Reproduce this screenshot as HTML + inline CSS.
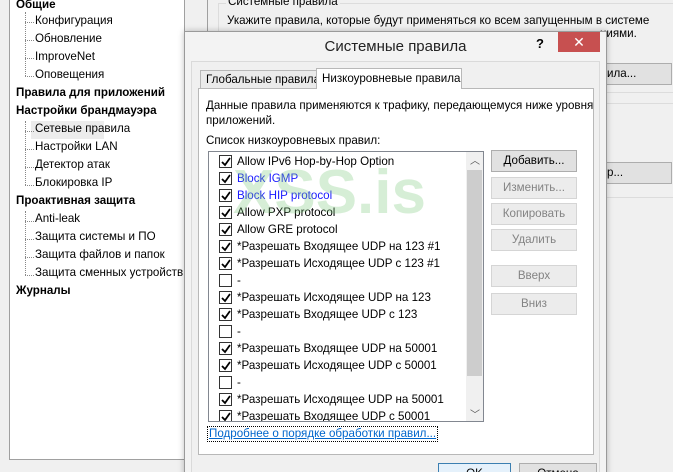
<!DOCTYPE html>
<html><head><meta charset="utf-8"><style>
*{margin:0;padding:0;box-sizing:border-box}
html,body{width:673px;height:472px;overflow:hidden}
body{background:#f0f0f0;font-family:"Liberation Sans","DejaVu Sans",sans-serif;font-size:11.6px;color:#000;position:relative}
.a{position:absolute;white-space:nowrap}
.tree{left:9px;top:-2px;width:176px;height:462px;background:#fff;border:1px solid #a0a0a0;border-top:none;overflow:hidden}
.b{font-weight:bold}
.dot{border-top:1px dotted #888;width:9px}
.vdot{border-left:1px dotted #888}
.btn{position:absolute;border:1px solid #adadad;background:#e1e1e1;text-align:center;line-height:20px;height:22px}
.dis{color:#838383;border-color:#d5d5d5;background:#ececec}
.row{position:absolute;left:10px;height:17px;line-height:17px}
.cb{position:absolute;left:0;top:2px;width:13px;height:13px;border:1px solid #333;background:#fff}
.cb svg{position:absolute;left:1px;top:1px}
.row span{position:absolute;left:18px}
</style></head><body>
<div class="a tree"></div>
<div class="a" style="left:207px;top:0;width:1px;height:32px;background:#a0a0a0"></div>
<div class="a" style="left:218px;top:3px;width:455px;height:90px;border:1px solid #dcdcdc;border-right:none"></div>
<div class="a" style="left:226px;top:-5px;background:#f0f0f0;padding:0 2px">Системные правила</div>
<div class="a" style="left:227px;top:14px">Укажите правила, которые будут применяться ко всем запущенным в системе</div>
<div class="a" style="left:600px;top:27px">ниями.</div>
<div class="btn" style="left:596px;top:63px;width:76px;text-align:left;padding-left:10px">ила...</div>
<div class="a" style="left:218px;top:103px;width:455px;height:95px;border-top:1px solid #dcdcdc;border-bottom:1px solid #dcdcdc"></div>
<div class="btn" style="left:596px;top:162px;width:76px;text-align:left;padding-left:10px">р...</div>

<div class="a vdot" style="left:25px;top:12px;height:64px"></div>
<div class="a vdot" style="left:25px;top:121px;height:64px"></div>
<div class="a vdot" style="left:25px;top:211px;height:64px"></div>
<div class="a b" style="left:16px;top:-2px">Общие</div>
<div class="a dot" style="left:25px;top:22px"></div><div class="a" style="left:35px;top:14px">Конфигурация</div>
<div class="a dot" style="left:25px;top:40px"></div><div class="a" style="left:35px;top:32px">Обновление</div>
<div class="a dot" style="left:25px;top:58px"></div><div class="a" style="left:35px;top:50px">ImproveNet</div>
<div class="a dot" style="left:25px;top:76px"></div><div class="a" style="left:35px;top:68px">Оповещения</div>
<div class="a b" style="left:16px;top:86px">Правила для приложений</div>
<div class="a b" style="left:16px;top:104px">Настройки брандмауэра</div>
<div class="a" style="left:31px;top:121px;width:73px;height:18px;background:#ececec"></div>
<div class="a dot" style="left:25px;top:131px"></div><div class="a" style="left:35px;top:122px">Сетевые правила</div>
<div class="a dot" style="left:25px;top:149px"></div><div class="a" style="left:35px;top:140px">Настройки LAN</div>
<div class="a dot" style="left:25px;top:167px"></div><div class="a" style="left:35px;top:158px">Детектор атак</div>
<div class="a dot" style="left:25px;top:185px"></div><div class="a" style="left:35px;top:176px">Блокировка IP</div>
<div class="a b" style="left:16px;top:194px">Проактивная защита</div>
<div class="a dot" style="left:25px;top:221px"></div><div class="a" style="left:35px;top:212px">Anti-leak</div>
<div class="a dot" style="left:25px;top:239px"></div><div class="a" style="left:35px;top:230px">Защита системы и ПО</div>
<div class="a dot" style="left:25px;top:257px"></div><div class="a" style="left:35px;top:248px">Защита файлов и папок</div>
<div class="a dot" style="left:25px;top:275px"></div><div class="a" style="left:35px;top:266px;width:149px;overflow:hidden">Защита сменных устройств</div>
<div class="a b" style="left:16px;top:284px">Журналы</div>

<div class="a" style="left:184px;top:31px;width:423px;height:450px;background:#f3f3f3;border:1px solid #9a9a9a;box-shadow:0 0 6px rgba(0,0,0,.25)"></div>
<div class="a" style="left:184px;top:38px;width:423px;text-align:center;font-size:15px;color:#222">Системные правила</div>
<div class="a b" style="left:536px;top:36px;font-size:13px">?</div>
<div class="a" style="left:558px;top:32px;width:42px;height:20px;background:#c75050;color:#fff;text-align:center;line-height:20px;font-size:14px">✕</div>
<div class="a" style="left:191px;top:61px;width:409px;height:420px;background:#f0f0f0;border:1px solid #dadada"></div>
<div class="a" style="left:200px;top:70px;width:117px;height:19px;border:1px solid #b8b8b8;background:#eaeaea;padding-left:5px;line-height:18px">Глобальные правила</div>
<div class="a" style="left:198px;top:88px;width:396px;height:367px;background:#fff;border:1px solid #b8b8b8"></div>
<div class="a" style="left:316px;top:68px;width:146px;height:21px;border:1px solid #b8b8b8;border-bottom:none;background:#fff;padding-left:5px;line-height:20px">Низкоуровневые правила</div>
<div class="a" style="left:206px;top:98px;line-height:15px">Данные правила применяются к трафику, передающемуся ниже уровня<br>приложений.</div>
<div class="a" style="left:206px;top:134px">Список низкоуровневых правил:</div>
<div class="a" style="left:208px;top:151px;width:276px;height:271px;border:1px solid #828790;background:#fff;overflow:hidden">
<div class="a" style="left:257px;top:0;width:17px;height:269px;background:#f0f0f0"></div>
<div class="a" style="left:258px;top:18px;width:15px;height:206px;background:#cdcdcd"></div>
<div class="a" style="left:261px;top:0;font-size:10px;color:#555">︿</div>
<div class="a" style="left:261px;top:254px;font-size:10px;color:#555">﹀</div>
<div id="rows"></div>
</div>
<div class="a" style="left:233px;top:158px;font-size:62px;line-height:70px;font-weight:bold;color:rgba(120,200,120,.3);font-family:'Liberation Sans',sans-serif">XSS.is</div>
<div class="btn" style="left:491px;top:150px;width:86px">Добавить...</div>
<div class="btn dis" style="left:491px;top:177px;width:86px">Изменить...</div>
<div class="btn dis" style="left:491px;top:203px;width:86px">Копировать</div>
<div class="btn dis" style="left:491px;top:229px;width:86px">Удалить</div>
<div class="btn dis" style="left:491px;top:265px;width:86px">Вверх</div>
<div class="btn dis" style="left:491px;top:293px;width:86px">Вниз</div>
<div class="a" style="left:207px;top:426px;color:#0066cc;text-decoration:underline;border:1px dotted #000;padding:0 1px;line-height:14px">Подробнее о порядке обработки правил...</div>
<div class="btn" style="left:438px;top:463px;width:73px;border-color:#3c7fb1;background:#e5f1fb">OK</div>
<div class="btn" style="left:519px;top:463px;width:78px">Отмена</div>
<script>
var r=[[1,"Allow IPv6 Hop-by-Hop Option"],[1,"Block IGMP",1],[1,"Block HIP protocol",1],[1,"Allow PXP protocol"],[1,"Allow GRE protocol"],[1,"*Разрешать Входящее UDP на 123 #1"],[1,"*Разрешать Исходящее UDP с 123 #1"],[0,"-"],[1,"*Разрешать Исходящее UDP на 123"],[1,"*Разрешать Входящее UDP с 123"],[0,"-"],[1,"*Разрешать Входящее UDP на 50001"],[1,"*Разрешать Исходящее UDP с 50001"],[0,"-"],[1,"*Разрешать Исходящее UDP на 50001"],[1,"*Разрешать Входящее UDP с 50001"]];
var h="";r.forEach(function(x,i){h+='<div class="row" style="top:'+(1+i*17)+'px"><div class="cb">'+(x[0]?'<svg width="10" height="10"><path d="M1 5 L4 8 L9 1" stroke="#000" stroke-width="1.8" fill="none"/></svg>':'')+'</div><span style="color:'+(x[2]?'#1a1aff':'#000')+'">'+x[1]+'</span></div>'});
document.getElementById("rows").innerHTML=h;
</script>
</body></html>
